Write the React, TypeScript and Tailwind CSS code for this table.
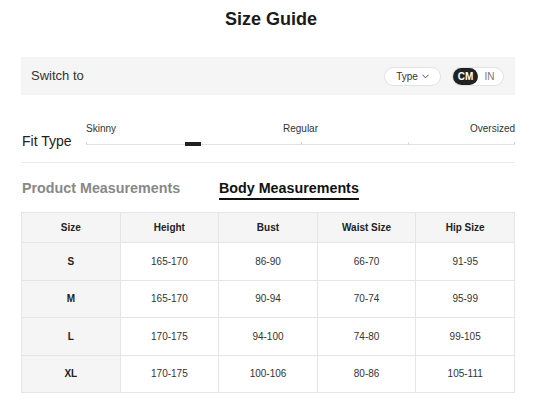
import React from "react";

const rows = [
  ["S", "165-170", "86-90", "66-70", "91-95"],
  ["M", "165-170", "90-94", "70-74", "95-99"],
  ["L", "170-175", "94-100", "74-80", "99-105"],
  ["XL", "170-175", "100-106", "80-86", "105-111"],
];
const headers = ["Size", "Height", "Bust", "Waist Size", "Hip Size"];

export default function App() {
  return (
    <div
      className="w-[542px] h-[403px] bg-white overflow-hidden"
      style={{ fontFamily: '"Liberation Sans", Arial, sans-serif' }}
    >
      <div className="pt-[7px] text-center text-[18px] leading-[24px] font-bold text-[#1a1a1a]">
        Size Guide
      </div>

      <div className="ml-[21px] mt-[26px] w-[494px] h-[38px] bg-[#f5f5f5] flex items-center justify-between pl-[10px] pr-[11px]">
        <span className="text-[13px] text-[#333]">Switch to</span>
        <div className="flex items-center gap-[11px]">
          <div className="w-[57px] h-[19px] rounded-full bg-white border border-[#e2e2e2] flex items-center justify-center gap-[4px] text-[10px] text-[#333]">
            <span>Type</span>
            <svg width="7" height="5" viewBox="0 0 7 5" fill="none">
              <polyline points="0.5,0.8 3.5,3.8 6.5,0.8" stroke="#333" strokeWidth="0.9" />
            </svg>
          </div>
          <div className="w-[52px] h-[19px] rounded-full bg-white border border-[#e2e2e2] flex items-center">
            <div className="w-[25px] h-[17px] rounded-full bg-[#222] text-white text-[10px] font-bold flex items-center justify-center">
              CM
            </div>
            <div className="flex-1 text-center text-[10px] text-[#777] pr-[2px]">IN</div>
          </div>
        </div>
      </div>

      <div className="ml-[21px] mt-[27px] w-[494px] h-[41px] border-b border-[#e8e8e8] flex">
        <div className="w-[65px] mt-[10px] text-[14px] leading-[18px] font-medium text-[#222] pl-[1px]">
          Fit Type
        </div>
        <div className="flex-1 flex flex-col">
          <div className="grid grid-cols-3 text-[10px] leading-[14px] text-[#333]">
            <span className="justify-self-start">Skinny</span>
            <span className="justify-self-center">Regular</span>
            <span className="justify-self-end">Oversized</span>
          </div>
          <div className="relative mt-[8px] h-[1px] bg-[#e3e3e3]">
            <span className="absolute left-0 top-[-2px] w-[1px] h-[3px] bg-[#d8d8d8]" />
            <span className="absolute left-[50%] top-[-2px] w-[1px] h-[3px] bg-[#d8d8d8]" />
            <span className="absolute left-[75%] top-[-2px] w-[1px] h-[3px] bg-[#d8d8d8]" />
            <span className="absolute right-0 top-[-2px] w-[1px] h-[3px] bg-[#d8d8d8]" />
            <span className="absolute left-[99px] top-[-2px] w-[16px] h-[4px] bg-[#222]" />
          </div>
        </div>
      </div>

      <div className="ml-[22px] mt-[16px] flex items-start">
        <div className="w-[197px] text-[14.3px] leading-[18px] font-bold text-[#888]">
          Product Measurements
        </div>
        <div className="text-[14.3px] leading-[18px] font-bold text-[#111] pb-[1px] border-b-2 border-[#111]">
          Body Measurements
        </div>
      </div>

      <table className="ml-[21px] mt-[12px] w-[494px] table-fixed border-collapse">
        <thead>
          <tr className="h-[30px] bg-[#f5f5f5]">
            {headers.map((h) => (
              <th
                key={h}
                className="border border-[#e5e5e5] text-[10px] font-bold text-[#222] text-center p-0"
              >
                {h}
              </th>
            ))}
          </tr>
        </thead>
        <tbody>
          {rows.map((r) => (
            <tr key={r[0]} className="h-[37.5px]">
              {r.map((c, i) => (
                <td
                  key={i}
                  className={
                    i === 0
                      ? "border border-[#e5e5e5] bg-[#f5f5f5] text-[10px] font-bold text-[#222] text-center p-0"
                      : "border border-[#e5e5e5] bg-white text-[10px] text-[#333] text-center p-0"
                  }
                >
                  {c}
                </td>
              ))}
            </tr>
          ))}
        </tbody>
      </table>
    </div>
  );
}
